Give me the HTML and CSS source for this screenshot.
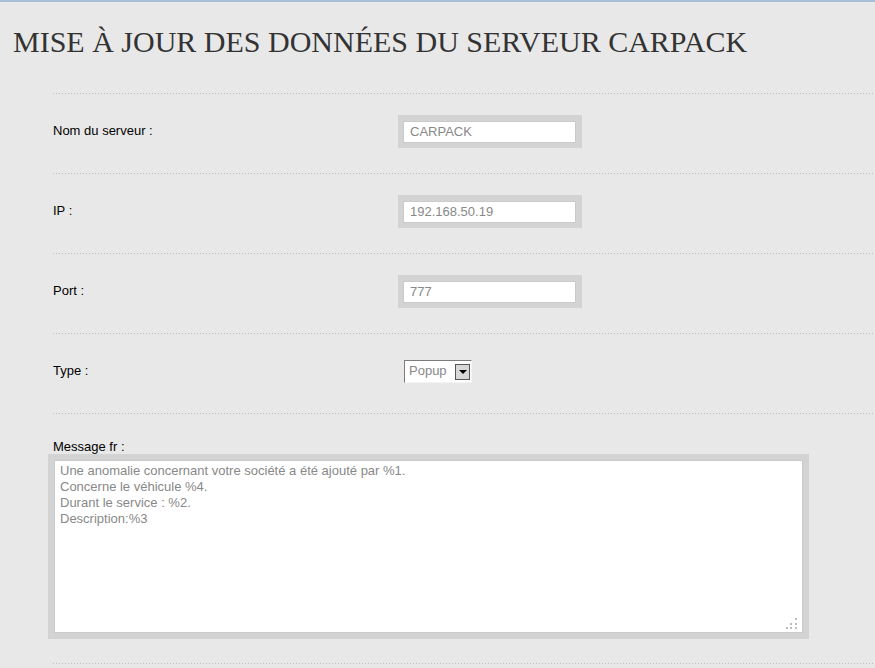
FILE: index.html
```html
<!DOCTYPE html>
<html lang="fr">
<head>
<meta charset="utf-8">
<title>Mise à jour des données du serveur CARPACK</title>
<link rel="stylesheet" href="styles.css">
</head>
<body>
<h1 class="title">MISE À JOUR DES DONNÉES DU SERVEUR CARPACK</h1>
<form class="form">
  <div class="row">
    <label class="label">Nom du serveur :</label>
    <input class="field" type="text" value="CARPACK">
  </div>
  <div class="row">
    <label class="label">IP :</label>
    <input class="field" type="text" value="192.168.50.19">
  </div>
  <div class="row">
    <label class="label">Port :</label>
    <input class="field" type="text" value="777">
  </div>
  <div class="row">
    <label class="label">Type :</label>
    <div class="select">
      <span class="select-value">Popup</span>
      <span class="select-btn"><svg width="8" height="4" viewBox="0 0 8 4"><path d="M0 0H8L4 4Z" fill="#000"/></svg></span>
    </div>
  </div>
  <div class="row row-message">
    <label class="label-block">Message fr :</label>
    <div class="ta-wrap">
      <textarea class="ta">Une anomalie concernant votre société a été ajouté par %1.
Concerne le véhicule %4.
Durant le service : %2.
Description:%3</textarea>
      <svg class="grip" width="11" height="11" viewBox="0 0 11 11"><g fill="#bcbcbc"><rect x="9" y="0" width="2" height="2"/><rect x="4" y="5" width="2" height="2"/><rect x="9" y="5" width="2" height="2"/><rect x="0" y="9" width="2" height="2"/><rect x="4" y="9" width="2" height="2"/><rect x="9" y="9" width="2" height="2"/></g></svg>
    </div>
  </div>
  <div class="row row-end"></div>
</form>
</body>
</html>
```

FILE: styles.css
```css
html, body {
  margin: 0;
  padding: 0;
  overflow: hidden;
}
body {
  background: #e8e8e8;
  border-top: 2px solid #a9bfd9;
  font-family: "Liberation Sans", Arial, sans-serif;
  font-size: 13px;
  color: #000;
}
.title {
  margin: 23px 0 0 0;
  padding-left: 13px;
  font-family: "Liberation Serif", "Times New Roman", serif;
  font-size: 30px;
  line-height: 34px;
  font-weight: normal;
  color: #333;
  white-space: nowrap;
}
.form {
  margin: 34px 0 0 53px;
}
.row {
  box-sizing: border-box;
  height: 80px;
  display: flex;
  align-items: center;
  padding: 1px 0 4px 0;
  background-image: linear-gradient(to right, #bdbdbd 1px, transparent 1px);
  background-size: 3px 1px;
  background-repeat: repeat-x;
  background-position: 0 0;
}
.label {
  width: 345px;
  line-height: 15px;
  padding-bottom: 3px;
  flex: none;
}
.field {
  box-sizing: border-box;
  width: 184px;
  height: 33px;
  margin: 0;
  border: 6px solid #d3d3d3;
  border-left-width: 5px;
  border-bottom-width: 5px;
  padding: 0 6px 1px 7px;
  background: #fff;
  font-family: "Liberation Sans", Arial, sans-serif;
  font-size: 13px;
  color: #888;
  outline: none;
  box-shadow: inset 0 0 0 1px #cacaca;
}
.select {
  box-sizing: border-box;
  width: 68px;
  height: 23px;
  margin-left: 6px;
  display: flex;
  align-items: center;
  background: #fff;
  border-top: 1px solid #7c7c7c;
  border-left: 1px solid #7c7c7c;
  border-right: 1px solid #f4f4f4;
  border-bottom: 1px solid #f4f4f4;
}
.select-value {
  padding-left: 4px;
  padding-bottom: 2px;
  color: #888;
  line-height: 15px;
}
.select-btn {
  box-sizing: border-box;
  width: 15px;
  height: 16px;
  margin-left: auto;
  margin-right: 1px;
  margin-top: 1px;
  display: flex;
  align-items: center;
  justify-content: center;
  background: #d8d8d8;
  border: 1px solid #555;
}
.row-message {
  display: block;
  height: auto;
  padding: 26px 0 24px 0;
}
.label-block {
  display: block;
  line-height: 15px;
}
.ta-wrap {
  position: relative;
  width: 761px;
  height: 185px;
  margin-left: -5px;
}
.ta {
  box-sizing: border-box;
  display: block;
  width: 761px;
  height: 185px;
  margin: 0;
  border: 6px solid #d3d3d3;
  padding: 3px 6px;
  background: #fff;
  font-family: "Liberation Sans", Arial, sans-serif;
  font-size: 13px;
  line-height: 16px;
  color: #888;
  resize: none;
  outline: none;
  overflow: hidden;
  box-shadow: inset 0 0 0 1px #cacaca;
}
.grip {
  position: absolute;
  right: 12px;
  bottom: 10px;
}
.row-end {
  height: 20px;
}
```
